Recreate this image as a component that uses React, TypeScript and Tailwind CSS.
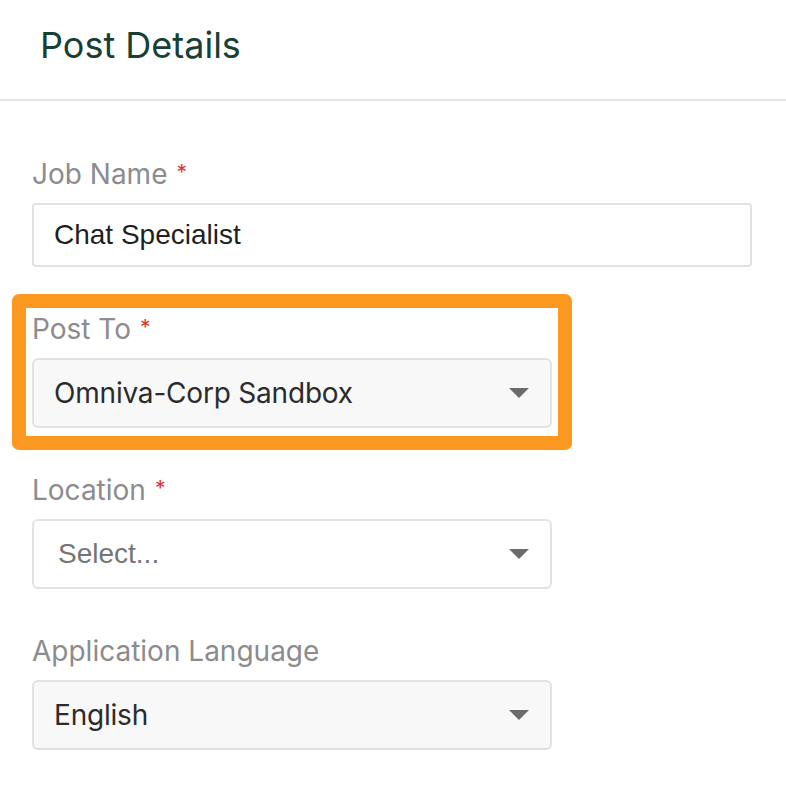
import type { ReactNode } from "react";

const Caret = () => (
  <svg width="20" height="10" viewBox="0 0 20 10" className="shrink-0">
    <path d="M0 0 L20 0 L10 10 Z" fill="#6b6b6b" />
  </svg>
);

interface FieldProps {
  label: string;
  required?: boolean;
  children: ReactNode;
}

const Field = ({ label, required, children }: FieldProps) => (
  <div>
    <div className="h-[32px] mb-[13px] flex items-center text-[28px] text-[#8c8c8c] font-['Inter',sans-serif]">
      {label}
      {required && <span className="ml-[9px] text-[21px] text-[#e0332b] -mt-[3px]">*</span>}
    </div>
    {children}
  </div>
);

interface SelectBoxProps {
  value: string;
  placeholder?: boolean;
  filled?: boolean;
}

const SelectBox = ({ value, placeholder, filled }: SelectBoxProps) => (
  <div
    className={`h-[70px] w-[520px] flex items-center justify-between pl-[20px] pr-[21px] border-2 border-[#e2e2e2] rounded-[6px] ${
      filled ? "bg-[#f8f8f8]" : "bg-white"
    }`}
  >
    {placeholder ? (
      <span className="pl-[4px] text-[28px] text-[#757575] font-['Liberation_Sans',Arial,sans-serif]">
        {value}
      </span>
    ) : (
      <span className="text-[28px] tracking-[-0.2px] text-[#2b2b2b] font-['Inter',sans-serif]">{value}</span>
    )}
    <Caret />
  </div>
);

export default function App() {
  return (
    <div className="min-h-screen bg-white">
      <div className="h-[101px] px-[40px] pt-[22px] border-b-2 border-[#e1e6e4]">
        <h1 className="text-[36px] leading-[46px] text-[#173f35] font-['Inter',sans-serif]">
          Post Details
        </h1>
      </div>

      <div className="px-[32px] pt-[57px] flex flex-col gap-[46px]">
        <Field label="Job Name" required>
          <div className="h-[64px] w-[720px] flex items-center px-[20px] border-2 border-[#e2e2e2] rounded-[4px] bg-white">
            <span className="text-[28px] text-[#1f1f1f] font-['Liberation_Sans',Arial,sans-serif]">
              Chat Specialist
            </span>
          </div>
        </Field>

        <div className="relative w-[520px]">
          <Field label="Post To" required>
            <SelectBox value="Omniva-Corp Sandbox" filled />
          </Field>
          {/* highlight annotation */}
          <div className="absolute -top-[19px] -bottom-[22px] -left-[20px] -right-[20px] border-[14px] border-[#fb9820] rounded-[7px] pointer-events-none" />
        </div>

        <Field label="Location" required>
          <SelectBox value="Select..." placeholder />
        </Field>

        <Field label="Application Language">
          <SelectBox value="English" filled />
        </Field>
      </div>
    </div>
  );
}
